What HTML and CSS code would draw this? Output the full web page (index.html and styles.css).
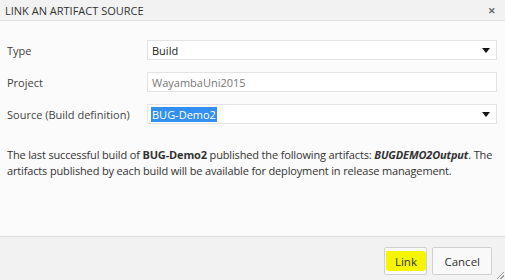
FILE: index.html
```html
<!DOCTYPE html>
<html lang="en">
    <head>
        <meta charset="UTF-8">
        <title>Link an artifact source</title>
        <link rel="stylesheet" href="styles.css">
    </head>
    <body>
        <div class="dialog">
            <div class="dialog-title">
                <span>LINK AN ARTIFACT SOURCE</span>
                <span class="close">&#x2715;</span>
            </div>
            <div class="dialog-body">
                <div class="form-row">
                    <label>Type</label>
                    <div class="field combo">
                        <span class="value">Build</span>
                        <span class="arrow"></span>
                    </div>
                </div>
                <div class="form-row">
                    <label>Project</label>
                    <div class="field disabled">
                        <span class="value">WayambaUni2015</span>
                    </div>
                </div>
                <div class="form-row">
                    <label>Source (Build definition)</label>
                    <div class="field combo">
                        <span class="value selected">BUG-Demo2</span>
                        <span class="arrow"></span>
                    </div>
                </div>
                <p class="info">
                    The last successful build of <b>BUG-Demo2</b> published the following artifacts: <b><i>BUGDEMO2Output</i></b>. The artifacts published by each build will be available for deployment in release management.
                </p>
            </div>
            <div class="dialog-footer">
                <button class="btn"><span class="marker">Link</span></button>
                <button class="btn">Cancel</button>
                <span class="grip"></span>
            </div>
        </div>
    </body>
</html>
```

FILE: styles.css
```css
body {
    margin: 0;
    font-family: "Open Sans", "Noto Sans", sans-serif;
    font-size: 11px;
    color: #333;
}

.dialog {
    width: 505px;
    height: 280px;
    display: flex;
    flex-direction: column;
    background-color: #fbfbfb;
    overflow: hidden;
}

.dialog-title {
    height: 20px;
    display: flex;
    align-items: center;
    justify-content: space-between;
    padding: 0 9px 0 5px;
    background-color: #f2f2f2;
    border-bottom: 1px solid #e0e0e0;
    font-size: 11px;
    color: #333;
}

.close {
    font-size: 9px;
    font-weight: bold;
    color: #666;
}

.dialog-body {
    flex: 1;
    padding: 19px 8px 0 7px;
}

.form-row {
    display: grid;
    grid-template-columns: 140px 1fr;
    align-items: center;
    margin-bottom: 12px;
}

.form-row label {
    color: #444;
}

.field {
    height: 18px;
    display: flex;
    align-items: center;
    justify-content: space-between;
    padding: 0 6px 0 3px;
    background-color: #fff;
    border: 1px solid #e3e3e3;
    color: #222;
}

.field.disabled {
    color: #777;
}

.value {
    padding: 0 1px;
}

.selected {
    background-color: #3390f0;
    color: #fff;
    line-height: 15px;
}

.arrow {
    width: 0;
    height: 0;
    border-left: 4px solid transparent;
    border-right: 4px solid transparent;
    border-top: 5px solid #111;
}

.info {
    margin: 23px 0 0 0;
    line-height: 16px;
    letter-spacing: -0.15px;
    color: #333;
}

.dialog-footer {
    height: 44px;
    display: flex;
    justify-content: flex-end;
    align-items: flex-start;
    gap: 5px;
    padding: 10px 13px 0 0;
    box-sizing: border-box;
    background-color: #f2f2f2;
    border-top: 1px solid #dcdcdc;
    position: relative;
}

.btn {
    height: 28px;
    padding: 0 11px;
    font-family: inherit;
    font-size: 11.5px;
    color: #333;
    background-color: #f9f9f9;
    border: 1px solid #d0d0d0;
    border-radius: 2px;
}

.btn:first-child {
    width: 43px;
    padding: 0;
}

.marker {
    display: inline-block;
    padding: 3px 9px 2px 9px;
    background-color: #f5f500;
    border-radius: 0 3px 3px 3px;
}

.grip {
    position: absolute;
    right: 1px;
    bottom: 1px;
    width: 7px;
    height: 7px;
    background: linear-gradient(135deg, transparent 45%, #999 46%, #999 54%, transparent 55%, transparent 70%, #999 71%, #999 79%, transparent 80%);
}
```
